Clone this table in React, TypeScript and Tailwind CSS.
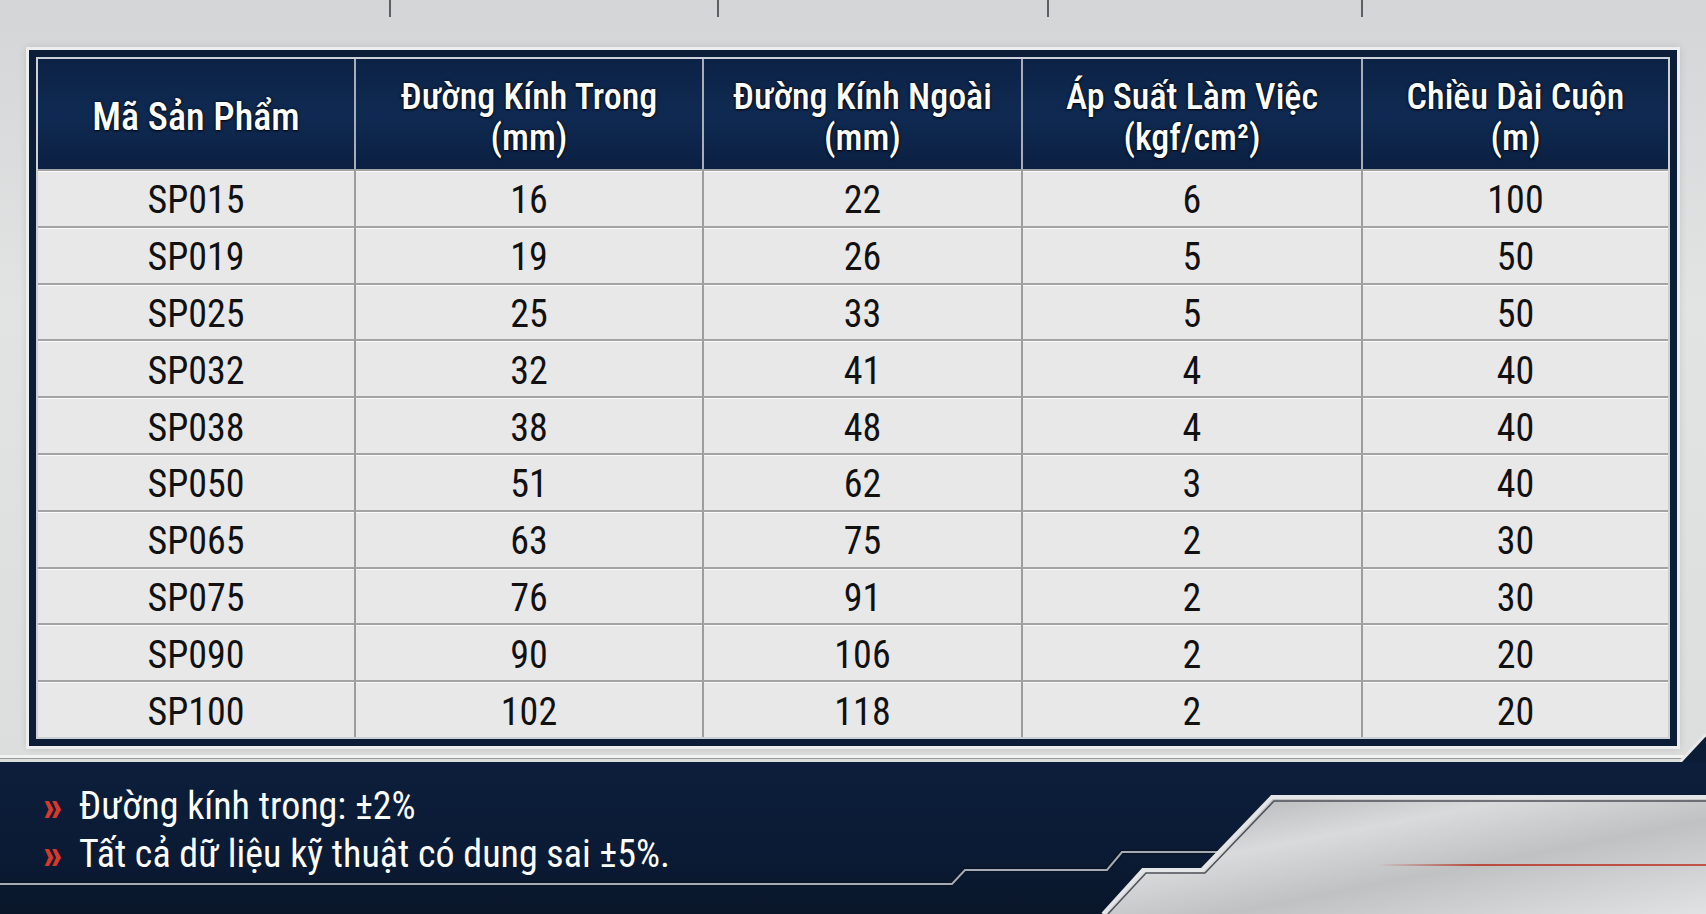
import React from 'react';

const FONT = 'Roboto, "DejaVu Sans Condensed", "Liberation Sans", sans-serif';

interface Row {
  code: string;
  inner: string;
  outer: string;
  pressure: string;
  length: string;
}

const rows: Row[] = [
  { code: 'SP015', inner: '16', outer: '22', pressure: '6', length: '100' },
  { code: 'SP019', inner: '19', outer: '26', pressure: '5', length: '50' },
  { code: 'SP025', inner: '25', outer: '33', pressure: '5', length: '50' },
  { code: 'SP032', inner: '32', outer: '41', pressure: '4', length: '40' },
  { code: 'SP038', inner: '38', outer: '48', pressure: '4', length: '40' },
  { code: 'SP050', inner: '51', outer: '62', pressure: '3', length: '40' },
  { code: 'SP065', inner: '63', outer: '75', pressure: '2', length: '30' },
  { code: 'SP075', inner: '76', outer: '91', pressure: '2', length: '30' },
  { code: 'SP090', inner: '90', outer: '106', pressure: '2', length: '20' },
  { code: 'SP100', inner: '102', outer: '118', pressure: '2', length: '20' },
];

const headers: React.ReactNode[] = [
  <span className="text-[38px]">Mã Sản Phẩm</span>,
  <>Đường Kính Trong<br />(mm)</>,
  <>Đường Kính Ngoài<br />(mm)</>,
  <>Áp Suất Làm Việc<br />(kgf/cm²)</>,
  <>Chiều Dài Cuộn<br />(m)</>,
];

function HeaderCell({ children, first }: { children: React.ReactNode; first?: boolean }) {
  return (
    <div
      className={`flex h-[110px] items-center justify-center whitespace-nowrap pt-[7px] text-center text-[36px] font-medium leading-[41px] text-white [font-stretch:75%] [text-shadow:0_1px_2px_rgba(0,0,0,0.9),0_0_3px_rgba(0,0,0,0.7)] ${first ? '' : 'border-l-2 border-[#a9aeb6]'}`}
    >
      <div>{children}</div>
    </div>
  );
}

function Cell({ children, first }: { children: React.ReactNode; first?: boolean }) {
  return (
    <div
      className={`flex h-[56.8px] items-center justify-center border-t-2 border-t-[#a3a3a3] pt-[5px] text-[38px] text-[#111111] [font-stretch:75%] shadow-[inset_0_1px_0_#fafafa] ${first ? '' : 'border-l-2 border-l-[#9d9d9d]'}`}
    >
      {children}
    </div>
  );
}

function BottomDecor() {
  return (
    <svg className="absolute inset-0" width="1706" height="152" viewBox="0 0 1706 152">
      <defs>
        <linearGradient id="metal" x1="0" y1="0" x2="1" y2="1">
          <stop offset="0" stopColor="#a9abae" />
          <stop offset="0.35" stopColor="#d9dadb" />
          <stop offset="0.6" stopColor="#bfc1c3" />
          <stop offset="1" stopColor="#e1e2e3" />
        </linearGradient>
        <linearGradient id="red" x1="0" y1="0" x2="1" y2="0">
          <stop offset="0" stopColor="#b8402f" stopOpacity="0" />
          <stop offset="0.3" stopColor="#b8402f" stopOpacity="0.9" />
          <stop offset="1" stopColor="#c0453a" stopOpacity="0.9" />
        </linearGradient>
      </defs>
      <polyline
        points="0,122 952,122 965,108 1107,108 1122,90 1230,90"
        fill="none"
        stroke="#0a1426"
        strokeWidth="5"
      />
      <polyline
        points="0,122 952,122 965,108 1107,108 1122,90 1230,90"
        fill="none"
        stroke="#a6abb3"
        strokeWidth="2"
      />
      <polygon
        points="1272,35 1706,35 1706,152 1103,152 1143,108 1202,108"
        fill="url(#metal)"
      />
      <polyline
        points="1103,152 1143,108 1202,108 1272,35 1706,35"
        fill="none"
        stroke="#e4e5e6"
        strokeWidth="4"
      />
      <polyline
        points="1108,152 1146,111 1205,111 1274,39 1706,39"
        fill="none"
        stroke="#4d5258"
        strokeWidth="1.5"
      />
      <rect x="1377" y="102" width="329" height="2" fill="url(#red)" />
    </svg>
  );
}

export default function App() {
  const ticks = [389, 326, 328, 312];
  return (
    <div className="flex h-[914px] w-[1706px] flex-col overflow-hidden" style={{ fontFamily: FONT }}>
      <div className="relative h-[762px] bg-[linear-gradient(180deg,#d4d5d6_0%,#e2e3e3_40%,#dcdddd_100%)]">
        <div className="flex h-[17px]">
          {ticks.map((w, i) => (
            <React.Fragment key={i}>
              <div style={{ width: w }} />
              <div className="w-[2px] bg-[#5d5f62]" />
            </React.Fragment>
          ))}
        </div>
        <div className="ml-[29px] mt-[33px] w-[1648px] bg-[#0c1d38] p-[7px] shadow-[0_0_0_3px_#eeeeee,0_0_8px_2px_rgba(0,0,0,0.15)]">
          <div className="border-2 border-[#ccd1d8]">
            <div className="grid grid-cols-[316px_348px_319px_340px_1fr] bg-[#e8e8e8]">
              {headers.map((h, i) => (
                <div key={i} className="bg-[linear-gradient(180deg,#0c2245_0%,#0f2a52_50%,#0b2042_100%)]">
                  <HeaderCell first={i === 0}>{h}</HeaderCell>
                </div>
              ))}
              {rows.map(r => (
                <React.Fragment key={r.code}>
                  <Cell first>{r.code}</Cell>
                  <Cell>{r.inner}</Cell>
                  <Cell>{r.outer}</Cell>
                  <Cell>{r.pressure}</Cell>
                  <Cell>{r.length}</Cell>
                </React.Fragment>
              ))}
            </div>
          </div>
        </div>
        <div className="mt-[9px] h-[3px] bg-[#f2f2f2] shadow-[0_1px_0_#9a9a9a]" />
        <svg className="absolute bottom-0 right-0" width="26" height="28" viewBox="0 0 26 28">
          <polygon points="26,0 26,28 0,28" fill="#0b1c36" />
          <line x1="26" y1="0" x2="0" y2="28" stroke="#e9e9e9" strokeWidth="3" />
        </svg>
      </div>
      <div className="relative h-[152px] bg-[linear-gradient(180deg,#0c1e3b_0%,#0b1b35_60%,#091629_100%)]">
        <BottomDecor />
        <div className="relative flex flex-col pl-[43px] pt-[20px] text-[38px] leading-[48px] text-white [font-stretch:85%]">
          <div className="flex items-center">
            <span className="w-[36px] text-[42px] font-black leading-[42px] text-[#d8392b]">»</span>
            <span>Đường kính trong: ±2%</span>
          </div>
          <div className="flex items-center">
            <span className="w-[36px] text-[42px] font-black leading-[42px] text-[#d8392b]">»</span>
            <span>Tất cả dữ liệu kỹ thuật có dung sai ±5%.</span>
          </div>
        </div>
      </div>
    </div>
  );
}
